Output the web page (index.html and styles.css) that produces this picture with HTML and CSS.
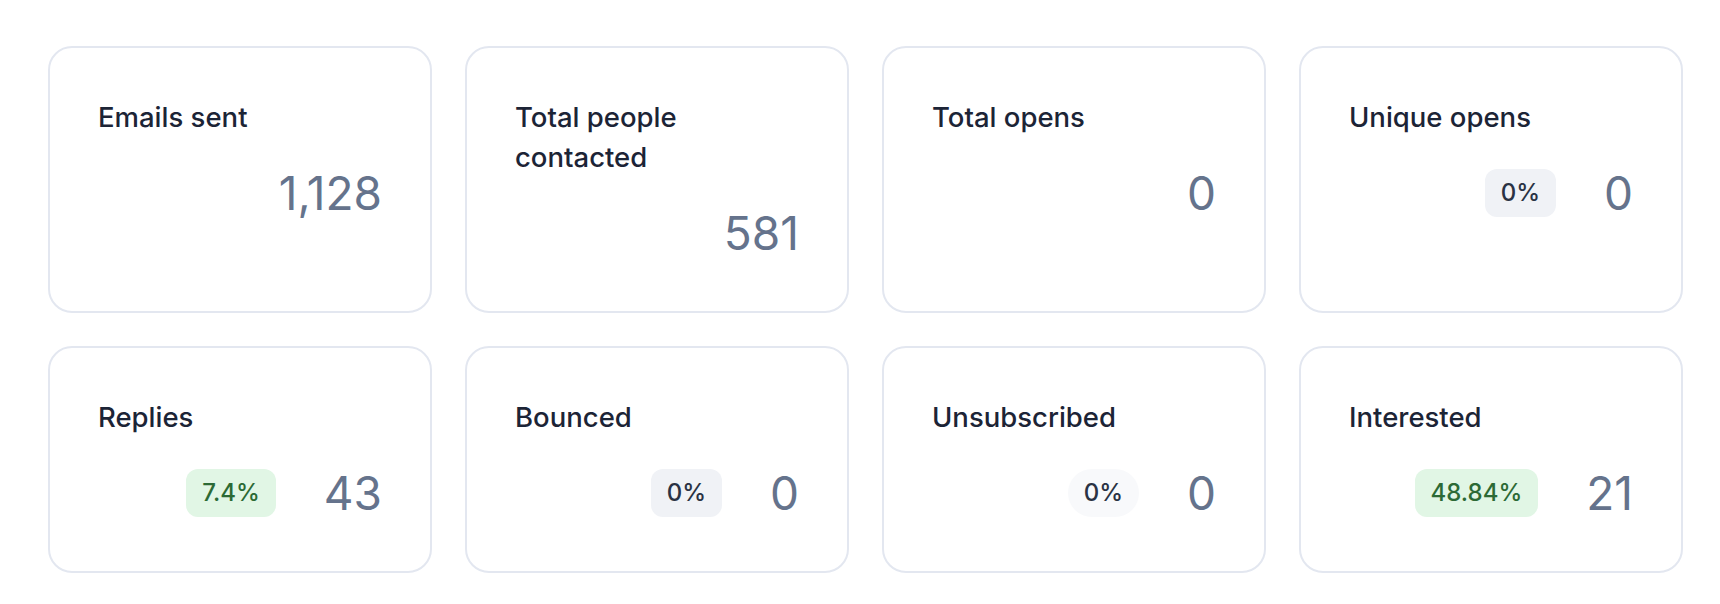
FILE: index.html
```html
<!DOCTYPE html>
<html>
    <head>
        <link rel="stylesheet" href="styles.css">
        <meta charset="UTF-8">
        <title>Campaign stats</title>
    </head>
    <body>
        <div class="stats">
            <div class="card">
                <div class="label">Emails sent</div>
                <div class="row">
                    <div class="value">1,128</div>
                </div>
            </div>
            <div class="card">
                <div class="label">Total people<br>contacted</div>
                <div class="row">
                    <div class="value">581</div>
                </div>
            </div>
            <div class="card">
                <div class="label">Total opens</div>
                <div class="row">
                    <div class="value">0</div>
                </div>
            </div>
            <div class="card">
                <div class="label">Unique opens</div>
                <div class="row">
                    <div class="pct">0%</div>
                    <div class="value">0</div>
                </div>
            </div>
            <div class="card">
                <div class="label">Replies</div>
                <div class="row">
                    <div class="pct good">7.4%</div>
                    <div class="value">43</div>
                </div>
            </div>
            <div class="card">
                <div class="label">Bounced</div>
                <div class="row">
                    <div class="pct">0%</div>
                    <div class="value">0</div>
                </div>
            </div>
            <div class="card">
                <div class="label">Unsubscribed</div>
                <div class="row">
                    <div class="pct pill">0%</div>
                    <div class="value">0</div>
                </div>
            </div>
            <div class="card">
                <div class="label">Interested</div>
                <div class="row">
                    <div class="pct good">48.84%</div>
                    <div class="value">21</div>
                </div>
            </div>
        </div>
    </body>
</html>
```

FILE: styles.css
```css
body{
    margin: 0;
    background: #fff;
    font-family: Inter, "Noto Sans", sans-serif;
}

.stats{
    width: 1635px;
    margin: 46px 0 0 48px;
    display: grid;
    grid-template-columns: repeat(4, 1fr);
    gap: 33px;
}

.card{
    border: 2px solid #e3e7f0;
    border-radius: 24px;
    padding: 49px 48px 48px 48px;
    display: flex;
    flex-direction: column;
}

.label{
    font-size: 27.5px;
    line-height: 40px;
    font-weight: 500;
    color: #1c2436;
}

.row{
    margin-top: 26px;
    display: flex;
    align-items: center;
    justify-content: flex-end;
    gap: 48px;
}

.value{
    font-size: 46px;
    line-height: 60px;
    font-weight: 400;
    color: #65738c;
}

.pct{
    font-size: 24px;
    line-height: 32px;
    font-weight: 500;
    padding: 8px 16px;
    border-radius: 12px;
    background: #f0f2f6;
    color: #2a3344;
}

.pct.good{
    background: #e1f6e5;
    color: #2c6a35;
}

.pct.pill{
    border-radius: 24px;
    background: #f8f9fb;
}
```
